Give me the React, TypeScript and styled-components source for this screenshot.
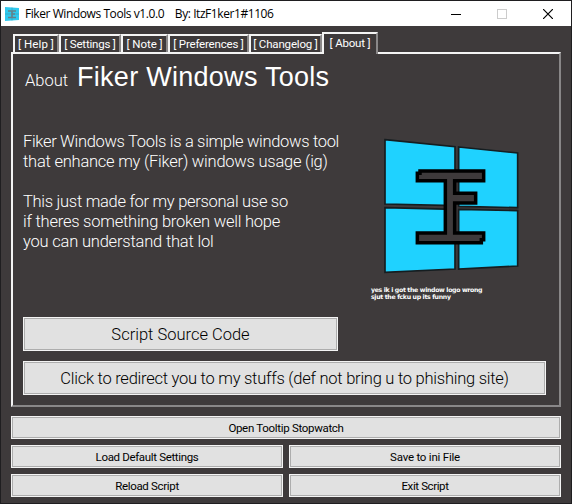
import React from "react";
import styled, { createGlobalStyle } from "styled-components";

const Global = createGlobalStyle`
  * { box-sizing: border-box; }
  body { margin: 0; background: #1f1e20; overflow: hidden; }
`;

const SANS = '"Liberation Sans", Arial, sans-serif';
const UI = 'Roboto, "Liberation Sans", sans-serif';

const Window = styled.main`
  width: 572px;
  height: 504px;
  padding: 1px 1px 1px;
  background: #1f1e20;
  display: flex;
  flex-direction: column;
  font-family: ${UI};
`;

const TitleBar = styled.header`
  height: 25px;
  flex: none;
  background: #fff;
  display: flex;
  align-items: center;
  padding-left: 4px;
  color: #000;
`;

const Title = styled.h1`
  margin: 0 0 0 6px;
  flex: 1;
  font: 400 12px/25px "Open Sans", sans-serif;
  white-space: pre;
  letter-spacing: -0.43px;
`;

const Controls = styled.div`
  display: flex;
`;

const Control = styled.button`
  width: 46px;
  height: 25px;
  padding: 0;
  border: 0;
  background: none;
  display: grid;
  place-items: center;
`;

const Body = styled.div`
  flex: 1;
  background: #3e3a3b;
  padding: 6px 10px 0;
  display: flex;
  flex-direction: column;
`;

const Tabs = styled.nav`
  height: 20px;
  display: flex;
  align-items: flex-end;
  padding-left: 2px;
`;

const Tab = styled.button<{ $w: number; $track: number; $active?: boolean }>`
  width: ${(p) => p.$w}px;
  height: ${(p) => (p.$active ? 22 : 18)}px;
  margin-bottom: ${(p) => (p.$active ? -2 : 0)}px;
  padding: ${(p) => (p.$active ? 1 : 0)}px 0 0;
  border: 2px solid #f4f4f4;
  border-right: 2px solid #8a8889;
  border-bottom: 0;
  background: #3e3a3b;
  color: #fff;
  font: 400 11.5px/17px ${UI};
  letter-spacing: ${(p) => p.$track}px;
  white-space: nowrap;
  display: flex;
  justify-content: center;
  position: ${(p) => (p.$active ? "relative" : "static")};
`;

const Panel = styled.section`
  height: 355px;
  flex: none;
  border: 2px solid #f4f4f4;
  border-right-color: #898788;
  border-bottom-color: #898788;
  padding: 8px 13px 10px 10px;
  color: #fff;
  display: flex;
  flex-direction: column;
`;

const Heading = styled.div`
  display: flex;
  align-items: baseline;
  gap: 8px;
  height: 31px;
  padding-left: 2px;
  line-height: 30px;
  white-space: nowrap;
`;

const Small = styled.span`
  width: 44px;
  font: 300 16.5px/30px ${UI};
`;

const Large = styled.h2`
  margin: 0;
  font: 400 27px/30px ${SANS};
  letter-spacing: 0.28px;
`;

const Content = styled.div`
  flex: 1;
  display: flex;
`;

const Copy = styled.div`
  width: 348px;
  padding-top: 39px;
`;

const Line = styled.p<{ $track: number }>`
  margin: 0;
  height: 20px;
  font: 300 16.5px/20px ${UI};
  letter-spacing: ${(p) => p.$track}px;
  white-space: nowrap;
`;

const Figure = styled.figure`
  margin: 0;
  padding-top: 45px;
`;

const Caption = styled.figcaption`
  font: 700 6.2px/7px "DejaVu Sans", sans-serif;
  letter-spacing: -0.32px;
  margin-top: 11px;
  white-space: nowrap;
`;

const PushButton = styled.button<{ $w?: number; $track?: number; $big?: boolean }>`
  width: ${(p) => (p.$w ? `${p.$w}px` : "100%")};
  height: ${(p) => (p.$big ? 34 : 23)}px;
  flex: none;
  padding: ${(p) => (p.$big ? 2 : 1)}px 0 0;
  border: 1px solid #f4f4f4;
  background: #e1e1e1;
  box-shadow: inset 0 0 0 1px #adadad;
  color: #000;
  font: ${(p) => (p.$big ? `300 16.5px/30px ${UI}` : `400 11.5px/20px ${UI}`)};
  letter-spacing: ${(p) => p.$track ?? 0}px;
  white-space: nowrap;
`;

const Links = styled.div`
  display: flex;
  flex-direction: column;
  gap: 10px;
`;

const Actions = styled.div`
  display: grid;
  grid-template-columns: 272px 272px;
  gap: 6px;
  margin-top: 9px;
  & > :first-child { grid-column: 1 / 3; }
`;

const GLYPH =
  "M172 160 H180 V153 H371 V182 H284 V220 H347 V249 H284 V339 H371 V359 H364 V368 H172 V339 H256 V182 H172 Z";

function Logo() {
  return (
    <svg width="137" height="137" viewBox="69 54 411 411" style={{ display: "block", marginLeft: 12 }}>
      <g fill="#1fd2ff" stroke="#151d20" strokeWidth="5">
        <path d="M75 59 L285 80 V257 L75 252 Z" />
        <path d="M296 81 L473 99 V263 L296 259 Z" />
        <path d="M75 263 L285 268 V447 L75 457 Z" />
        <path d="M296 268 L473 272 V438 L296 447 Z" />
      </g>
      <path d={GLYPH} fill="#3e3a3b" stroke="#000" strokeWidth="10.5" />
    </svg>
  );
}

function AppIcon() {
  return (
    <svg width="14" height="14" viewBox="0 0 14 14">
      <path d="M0 0 L14 1 V13 L0 14 Z" fill="#2fc9ee" />
      <path d="M7 0.5 V13.5 M0 7 H14" stroke="#3b99b0" strokeWidth="0.6" />
      <path d="M3 4 H11 M3 10.5 H11 M7 4 V10 M7 7 H10" stroke="#64828b" strokeWidth="1.6" />
    </svg>
  );
}

const TABS = [
  { name: "Help", w: 46, track: 0.08 },
  { name: "Settings", w: 62, track: -0.21 },
  { name: "Note", w: 47, track: -0.05 },
  { name: "Preferences", w: 81, track: -0.19 },
  { name: "Changelog", w: 73, track: -0.16 },
  { name: "About", w: 56, track: -0.18, active: true },
];

const LINES = [
  { text: "Fiker Windows Tools is a simple windows tool", track: -0.32 },
  { text: "that enhance my (Fiker) windows usage (ig)", track: -0.23 },
  { text: "", track: 0 },
  { text: "This just made for my personal use so", track: -0.29 },
  { text: "if theres something broken well hope", track: -0.23 },
  { text: "you can understand that lol", track: -0.2 },
];

export default function App() {
  return (
    <>
      <Global />
      <Window>
        <TitleBar>
          <AppIcon />
          <Title>{"Fiker Windows Tools v1.0.0    By: ItzF1ker1#1106"}</Title>
          <Controls>
            <Control aria-label="Minimize">
              <svg width="10" height="10"><path d="M0 5.5 H10" stroke="#000" /></svg>
            </Control>
            <Control aria-label="Maximize">
              <svg width="10" height="10"><rect x=".5" y=".5" width="9" height="9" fill="none" stroke="#ccc" /></svg>
            </Control>
            <Control aria-label="Close">
              <svg width="10" height="10"><path d="M0 0 L10 10 M10 0 L0 10" stroke="#000" strokeWidth="1.2" /></svg>
            </Control>
          </Controls>
        </TitleBar>
        <Body>
          <Tabs>
            {TABS.map((t) => (
              <Tab key={t.name} $w={t.w} $track={t.track} $active={t.active}>
                {`[ ${t.name} ]`}
              </Tab>
            ))}
          </Tabs>
          <Panel>
            <Heading>
              <Small>About</Small>
              <Large>Fiker Windows Tools</Large>
            </Heading>
            <Content>
              <Copy>
                {LINES.map((l, i) => (
                  <Line key={i} $track={l.track}>{l.text}</Line>
                ))}
              </Copy>
              <Figure>
                <Logo />
                <Caption>
                  yes ik i got the window logo wrong
                  <br />
                  sjut the fcku up its funny
                </Caption>
              </Figure>
            </Content>
            <Links>
              <PushButton $big $w={315}>Script Source Code</PushButton>
              <PushButton $big $track={-0.25}>Click to redirect you to my stuffs (def not bring u to phishing site)</PushButton>
            </Links>
          </Panel>
          <Actions>
            <PushButton $track={-0.31}>Open Tooltip Stopwatch</PushButton>
            <PushButton $track={-0.34}>Load Default Settings</PushButton>
            <PushButton $track={-0.22}>Save to ini File</PushButton>
            <PushButton $track={-0.32}>Reload Script</PushButton>
            <PushButton $track={-0.4}>Exit Script</PushButton>
          </Actions>
        </Body>
      </Window>
    </>
  );
}
